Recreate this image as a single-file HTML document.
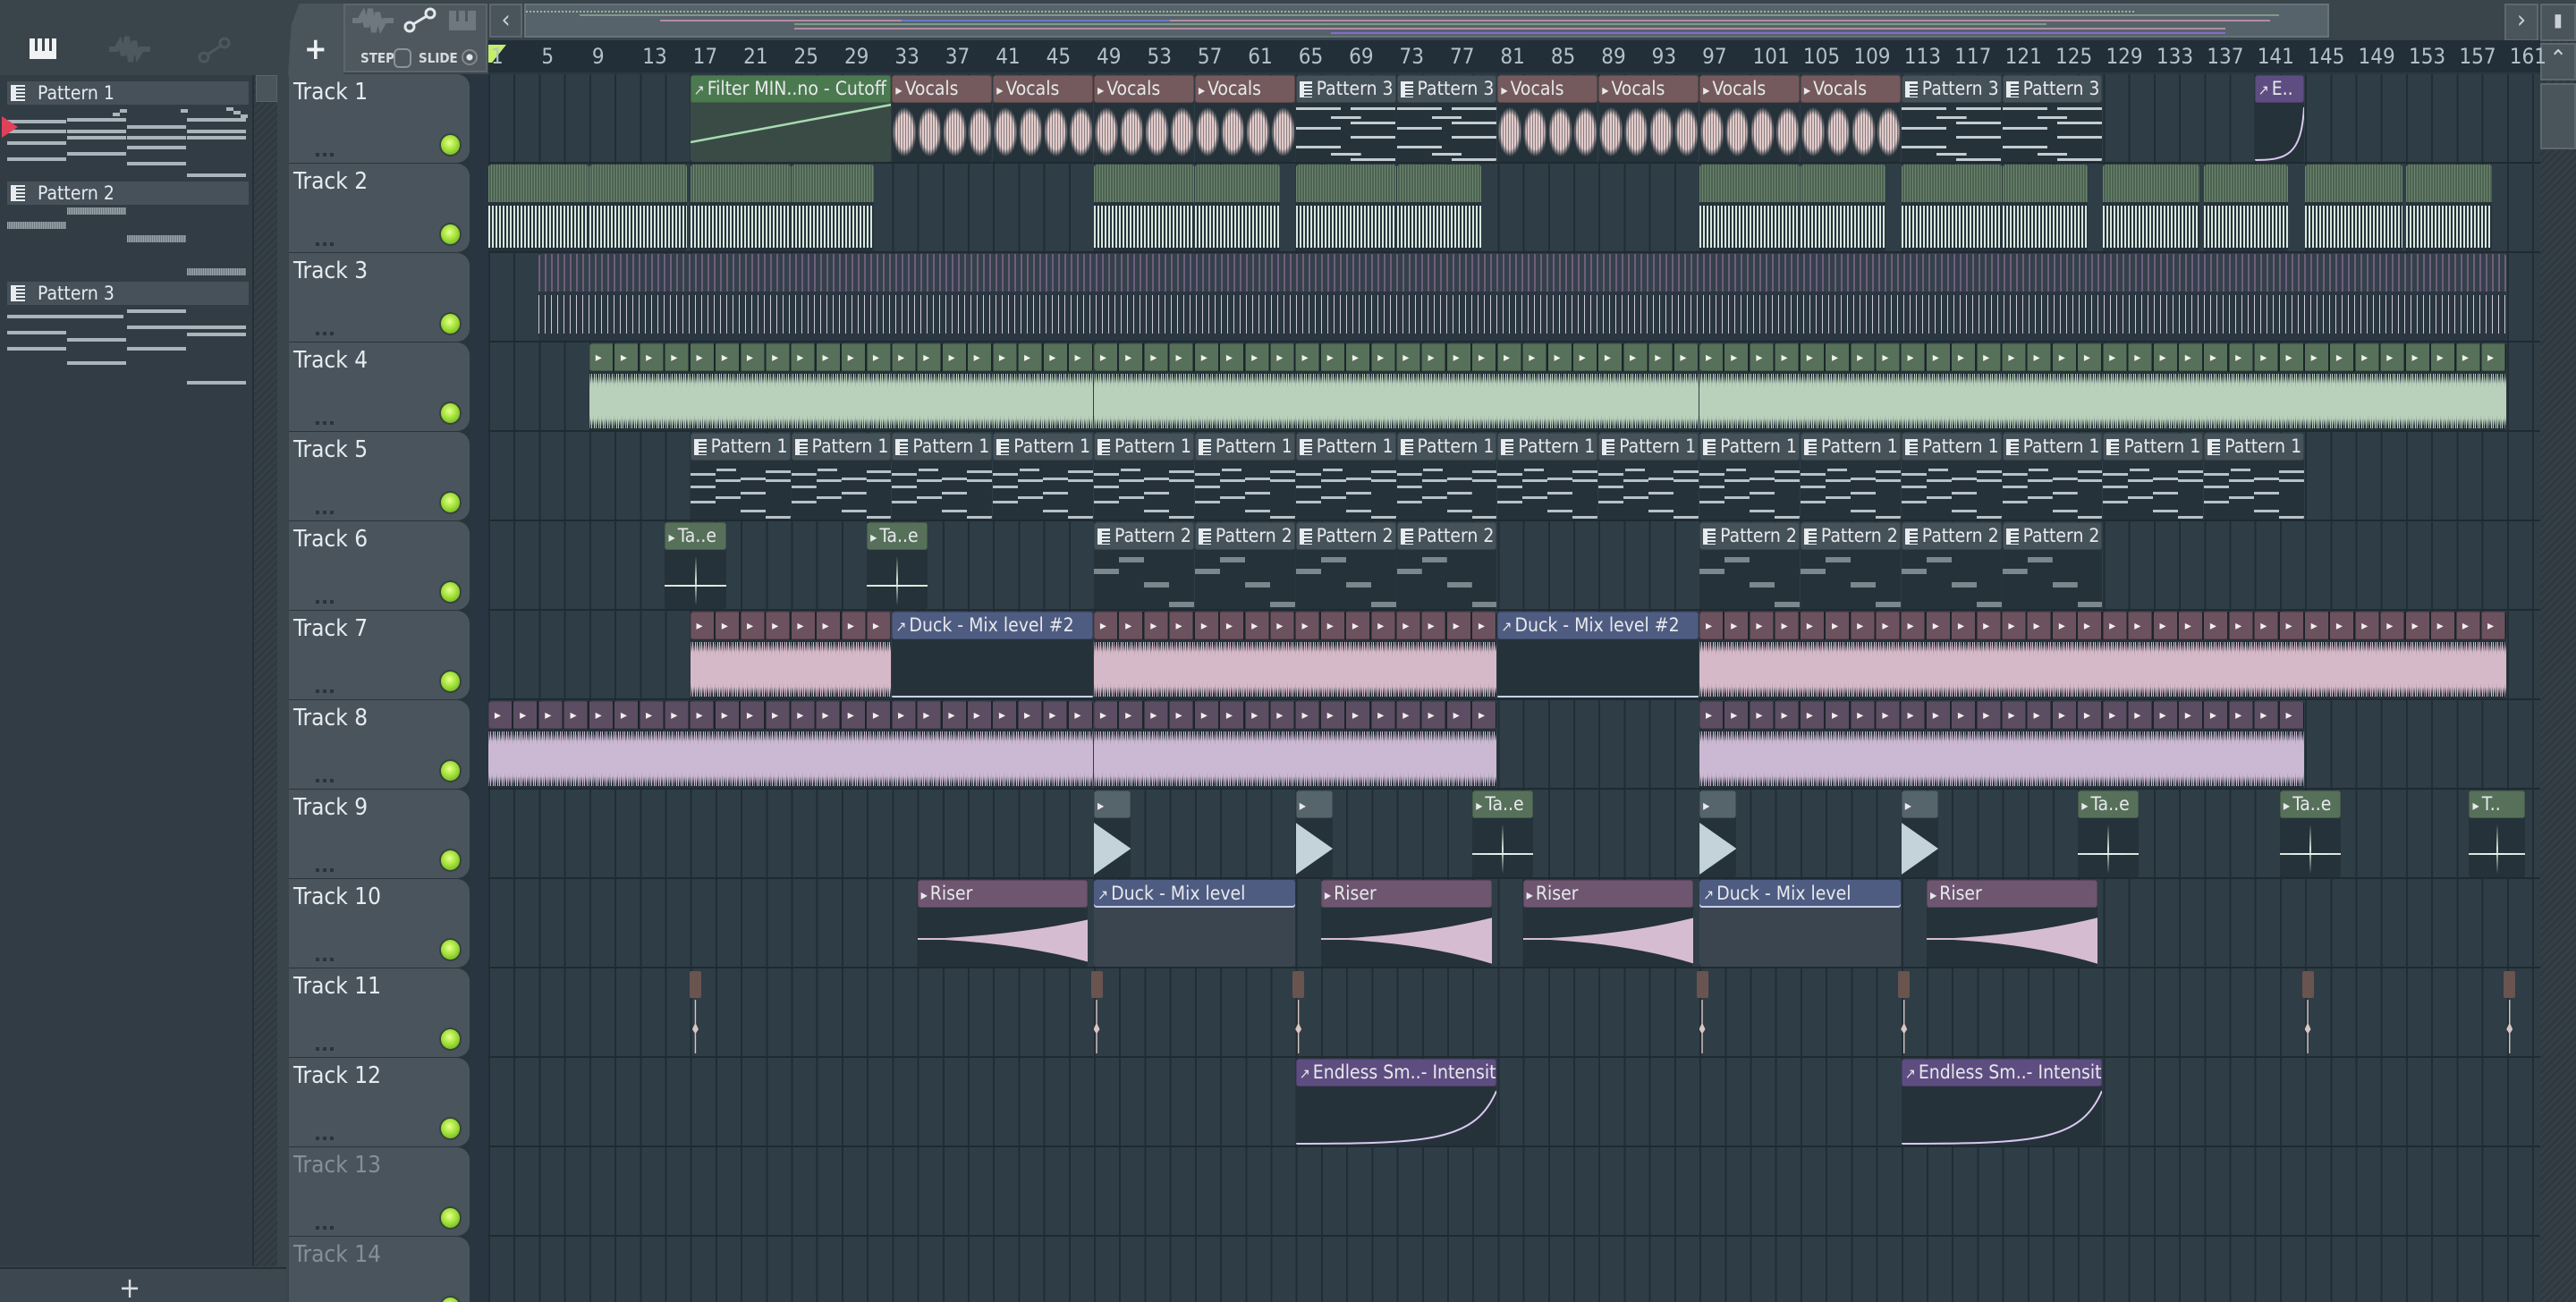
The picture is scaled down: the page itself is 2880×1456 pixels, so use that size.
<!DOCTYPE html>
<html><head><meta charset="utf-8"><style>
*{box-sizing:border-box;margin:0;padding:0}
html,body{width:2880px;height:1456px;overflow:hidden}
body{background:#3a444b;font-family:"DejaVu Sans Condensed","Liberation Sans Narrow","Liberation Sans",sans-serif;font-stretch:condensed;position:relative;color:#dfe5ea}
.a{position:absolute}
.x{left:calc(546px + (var(--b) - 1)*14.105px)}
#lp{left:0;top:0;width:320px;height:1456px;background:#3a444b}
#plist{left:0;top:84px;width:282px;height:1332px;background:#313c44}
#psb{left:282px;top:84px;width:28px;height:1332px;background:repeating-linear-gradient(135deg,#2f393f 0 3px,#343f46 3px 6px);border-left:2px solid #262f35}
#psb .th{left:2px;top:0;width:24px;height:30px;background:#4a545b;border:1px solid #596369}
#pbot{left:0;top:1417px;width:320px;height:39px;background:#3d474f;border-top:2px solid #262f35}
.pi{left:8px;width:270px;height:26px;background:#46515a;font-size:21px;line-height:26px;padding-left:34px;color:#e6eaee}
.pi i{position:absolute;left:4px;top:4px;width:16px;height:18px;background:repeating-linear-gradient(#e8ecef 0 2px,#46515a 2px 4px) 6px 0/10px 100% no-repeat,#e8ecef}
.pv{left:8px;width:270px;height:78px}
.nt{position:absolute;height:4px;background:#aab5bb}
.nd{position:absolute;height:8px;background:repeating-linear-gradient(90deg,#9aa5ab 0 1px,#6c777d 1px 2px)}
#th{left:323px;top:83px;width:202px;height:1373px;background:#2a343b}
.tr{position:absolute;left:0;width:202px;height:99px;background:#4a545c;border-radius:0 14px 14px 0}
.tr b{position:absolute;left:5px;top:5px;font-weight:normal;font-size:26px;color:#e6ebef}
.tr.d b{color:#858f96}
.tr .led{position:absolute;left:170px;top:68px;width:21px;height:22px;border-radius:50%;background:radial-gradient(circle at 45% 40%,#e6ff8c 0,#a2e23a 45%,#5ea41a 100%);box-shadow:0 0 0 2px #38443a}
.tr .dd{position:absolute;left:30px;top:88px;width:22px;height:4px;background:repeating-linear-gradient(90deg,#2b343a 0 4px,transparent 4px 8px)}
#strip{left:525px;top:83px;width:21px;height:1373px;background:#293540}
#grid{left:546px;top:83px;width:2294px;height:1373px;background:
repeating-linear-gradient(180deg,transparent 0 98px,#1f2a31 98px 100px),
repeating-linear-gradient(90deg,#222d35 0 2px,transparent 2px 28.21px),#2f3d46}
#ruler{left:546px;top:45px;width:2294px;height:38px;background:#222f38;border-bottom:2px solid #2a3740}
.rl{position:absolute;top:4px;font-size:24px;color:#b3c0c8;margin-left:3px}
#ovl{left:586px;top:4px;width:2018px;height:38px;background:#56636a;border:2px solid #67737a}
.bt{background:#4a545b;border:2px solid #5d676d;color:#c9d1d6;font-size:28px;text-align:center;line-height:32px}
.c{position:absolute;left:calc(546px + (var(--b) - 1)*14.105px);width:calc(var(--l)*14.105px - 1px);top:calc(84px + (var(--t) - 1)*100px);height:97px;background:#26323a;overflow:hidden;border-radius:3px}
.h{position:relative;height:31px;background:var(--hc,#46525a);color:#e7e9ec;font-size:21px;line-height:31px;padding-left:4px;white-space:nowrap;overflow:hidden;border-radius:3px;box-shadow:inset 0 0 0 1px rgba(0,0,0,.18)}
.h s{text-decoration:none;font-family:"DejaVu Sans",sans-serif;font-size:16px;margin-right:3px}
.h .pg{display:inline-block;width:14px;height:18px;vertical-align:-3px;margin-right:5px;background:repeating-linear-gradient(#e8ecef 0 2px,#46525a 2px 4px) 5px 1px/9px 16px no-repeat,#e8ecef}
.wv{position:absolute;left:0;right:0;top:34px;bottom:2px;background:linear-gradient(180deg,transparent 4%,var(--w) 18%,var(--w) 82%,transparent 96%),repeating-linear-gradient(90deg,var(--w) 0 1px,transparent 1px 2px,var(--w) 2px 3px,transparent 3px 5px)}
.wv:after{content:"";position:absolute;left:0;right:0;top:0;bottom:0;background:repeating-linear-gradient(90deg,rgba(38,50,58,.55) 0 1px,transparent 1px 4px,rgba(38,50,58,.3) 4px 5px,transparent 5px 9px);-webkit-mask:linear-gradient(180deg,#000 0,transparent 25%,transparent 75%,#000 100%)}
.seg{background:repeating-linear-gradient(90deg,var(--hc) 0 26px,rgba(0,0,0,.25) 26px 28.21px);font-family:"DejaVu Sans Mono",monospace;font-size:18px;letter-spacing:17.36px;padding-left:5px;color:#f2f0ee;font-weight:bold}
.g{--hc:#56705a;--w:#b9d0bb}
.pk{--hc:#6c525e;--w:#d6b9c8}
.pp{--hc:#5c4d62;--w:#cbb8d2}
.ri{--hc:#6e5670;--w:#d6bcd0}
.vo{--hc:#745a5c}
.vo .bl{position:absolute;left:0;right:0;top:36px;bottom:6px;background:radial-gradient(ellipse 48% 50% at 50% 50%,#e5cccb 0 70%,transparent 100%) 0 0/28.2px 100% repeat-x}
.vo .bl:after{content:"";position:absolute;inset:0;background:repeating-linear-gradient(90deg,rgba(38,50,58,.5) 0 1px,transparent 1px 3px)}
.pt .nb{position:absolute;left:0;right:0;top:34px;bottom:0}
.p1 .nb{background:
linear-gradient(#b7c1c7,#b7c1c7) 0% 18%/25% 3px no-repeat,
linear-gradient(#b7c1c7,#b7c1c7) 0% 42%/25% 3px no-repeat,
linear-gradient(#b7c1c7,#b7c1c7) 0% 70%/25% 3px no-repeat,
linear-gradient(#b7c1c7,#b7c1c7) 33.3% 30%/25% 3px no-repeat,
linear-gradient(#b7c1c7,#b7c1c7) 33.3% 62%/25% 3px no-repeat,
linear-gradient(#b7c1c7,#b7c1c7) 33.3% 10%/20% 3px no-repeat,
linear-gradient(#b7c1c7,#b7c1c7) 66.7% 26%/25% 3px no-repeat,
linear-gradient(#b7c1c7,#b7c1c7) 66.7% 54%/25% 3px no-repeat,
linear-gradient(#b7c1c7,#b7c1c7) 66.7% 86%/25% 3px no-repeat,
linear-gradient(#b7c1c7,#b7c1c7) 100% 14%/25% 3px no-repeat,
linear-gradient(#b7c1c7,#b7c1c7) 100% 30%/25% 3px no-repeat,
linear-gradient(#b7c1c7,#b7c1c7) 100% 98%/25% 3px no-repeat}
.p3 .nb{background:
linear-gradient(#c3ccd1,#c3ccd1) 0% 4%/45% 3px no-repeat,
linear-gradient(#c3ccd1,#c3ccd1) 0% 40%/45% 3px no-repeat,
linear-gradient(#c3ccd1,#c3ccd1) 0% 75%/45% 3px no-repeat,
linear-gradient(#c3ccd1,#c3ccd1) 100% 4%/45% 3px no-repeat,
linear-gradient(#c3ccd1,#c3ccd1) 100% 30%/45% 3px no-repeat,
linear-gradient(#c3ccd1,#c3ccd1) 100% 56%/45% 3px no-repeat,
linear-gradient(#c3ccd1,#c3ccd1) 100% 98%/45% 3px no-repeat,
linear-gradient(#c3ccd1,#c3ccd1) 50% 20%/30% 3px no-repeat,
linear-gradient(#c3ccd1,#c3ccd1) 50% 88%/30% 3px no-repeat}
.p2 .nb{background:
linear-gradient(#7c878d,#7c878d) 0% 32%/25% 6px no-repeat,
linear-gradient(#7c878d,#7c878d) 33.3% 8%/25% 6px no-repeat,
linear-gradient(#7c878d,#7c878d) 66.7% 58%/25% 6px no-repeat,
linear-gradient(#7c878d,#7c878d) 100% 97%/25% 6px no-repeat}
.t2{background:#26323a}
.t2 .up{position:absolute;left:0;right:0;top:0;height:42px;background:repeating-linear-gradient(90deg,#6b8470 0 1px,#4d6351 1px 3px)}
.t2 .lo{position:absolute;left:0;right:0;top:46px;bottom:4px;background:repeating-linear-gradient(90deg,#d8e8de 0 2px,transparent 2px 4px)}
.t3{background:#2a3640}
.t3 .up{position:absolute;left:0;right:0;top:0;height:42px;background:repeating-linear-gradient(90deg,#6e5e7c 0 2px,#34404a 2px 7px)}
.t3 .lo{position:absolute;left:0;right:0;top:46px;bottom:8px;background:repeating-linear-gradient(90deg,#cfc8d8 0 1px,transparent 1px 7px)}
.gy{--hc:#56646c}
.tri{position:absolute;left:0;top:36px;width:100%;height:58px;background:#c3d3d9;clip-path:polygon(0 0,100% 50%,0 100%)}
.star{position:absolute;left:0;right:0;top:38px;bottom:4px}
.star:before{content:"";position:absolute;left:calc(50% - 1px);top:0;bottom:0;width:2px;background:linear-gradient(180deg,transparent,#d6e6d6 50%,transparent)}
.star:after{content:"";position:absolute;left:0;right:0;top:calc(50% + 4px);height:2px;background:linear-gradient(90deg,#d6e6d6,#e8f2e8 50%,#d6e6d6)}
.sg{--hc:#57705a}
.du{--hc:#4f5c82}
.pa{--hc:#5e4d80}
svg{position:absolute;left:0;top:0}
.mk{position:absolute;width:13px;top:calc(84px + 10*100px);height:97px;left:calc(546px + (var(--b) - 1)*14.105px - 12px)}
.mk .mh{position:absolute;left:0;top:2px;width:13px;height:30px;background:#6a5450;border-radius:2px}
.mk .ml{position:absolute;left:3px;top:34px;width:7px;height:60px;background:#d8c6c2;clip-path:polygon(40% 0,60% 0,60% 45%,100% 55%,60% 62%,60% 100%,40% 100%,40% 62%,0 55%,40% 45%)}
</style></head><body>

<div class="a" id="lp"></div>
<div class="a" style="left:33px;top:43px;width:30px;height:23px;background:#f0f2f3"></div>
<div class="a" style="left:39px;top:43px;width:3px;height:14px;background:#3a444b"></div>
<div class="a" style="left:47px;top:43px;width:3px;height:14px;background:#3a444b"></div>
<div class="a" style="left:55px;top:43px;width:3px;height:14px;background:#3a444b"></div>
<svg style="left:120px;top:38px" width="50" height="34"><path d="M2 17 L10 17 L14 10 L18 24 L22 3 L26 31 L30 8 L34 24 L38 17 L48 17" stroke="#4c575e" stroke-width="6" fill="none"/></svg>
<svg style="left:220px;top:40px" width="40" height="32"><circle cx="8" cy="24" r="5" stroke="#4c575e" stroke-width="3" fill="none"/><circle cx="31" cy="8" r="5" stroke="#4c575e" stroke-width="3" fill="none"/><path d="M12 21 L27 11" stroke="#4c575e" stroke-width="3"/></svg>
<div class="a" id="plist"></div>
<div class="a" id="psb"><div class="a th"></div></div>
<div class="a" id="pbot"><span class="a" style="left:133px;top:2px;font-size:32px;color:#d9dee2;font-family:'DejaVu Sans',sans-serif">+</span></div>

<div class="a pi" style="top:91px"><i></i>Pattern 1</div>
<div class="a pv" style="top:118px">
<div class="nt" style="left:0;top:16px;width:66px"></div><div class="nt" style="left:0;top:27px;width:66px"></div><div class="nt" style="left:0;top:40px;width:66px"></div><div class="nt" style="left:0;top:58px;width:66px"></div>
<div class="nt" style="left:67px;top:14px;width:66px"></div><div class="nt" style="left:67px;top:27px;width:66px"></div><div class="nt" style="left:67px;top:34px;width:66px"></div><div class="nt" style="left:67px;top:52px;width:66px"></div><div class="nt" style="left:118px;top:8px;width:8px"></div><div class="nt" style="left:126px;top:4px;width:8px"></div>
<div class="nt" style="left:134px;top:22px;width:66px"></div><div class="nt" style="left:134px;top:34px;width:66px"></div><div class="nt" style="left:134px;top:45px;width:66px"></div><div class="nt" style="left:134px;top:63px;width:66px"></div><div class="nt" style="left:194px;top:4px;width:8px"></div>
<div class="nt" style="left:201px;top:14px;width:66px"></div><div class="nt" style="left:201px;top:27px;width:66px"></div><div class="nt" style="left:201px;top:34px;width:66px"></div><div class="nt" style="left:201px;top:76px;width:66px"></div><div class="nt" style="left:245px;top:2px;width:8px"></div><div class="nt" style="left:253px;top:6px;width:8px"></div><div class="nt" style="left:261px;top:10px;width:8px"></div>
</div>
<div class="a" style="left:2px;top:130px;width:18px;height:24px;background:#e0405a;clip-path:polygon(0 0,100% 50%,0 100%)"></div>
<div class="a pi" style="top:203px"><i></i>Pattern 2</div>
<div class="a pv" style="top:230px">
<div class="nd" style="left:67px;top:2px;width:66px"></div><div class="nd" style="left:0;top:18px;width:66px"></div><div class="nd" style="left:134px;top:33px;width:66px"></div><div class="nd" style="left:201px;top:70px;width:66px"></div>
</div>
<div class="a pi" style="top:315px"><i></i>Pattern 3</div>
<div class="a pv" style="top:342px">
<div class="nt" style="left:0;top:10px;width:130px"></div><div class="nt" style="left:0;top:28px;width:66px"></div><div class="nt" style="left:0;top:46px;width:66px"></div><div class="nt" style="left:67px;top:36px;width:66px"></div><div class="nt" style="left:67px;top:62px;width:66px"></div>
<div class="nt" style="left:134px;top:4px;width:66px"></div><div class="nt" style="left:134px;top:22px;width:133px"></div><div class="nt" style="left:134px;top:46px;width:66px"></div><div class="nt" style="left:201px;top:30px;width:66px"></div><div class="nt" style="left:201px;top:84px;width:66px"></div>
</div>

<div class="a" style="left:322px;top:4px;width:62px;height:80px;background:#4a545b;clip-path:polygon(20% 0,100% 0,100% 100%,0 100%,6% 30%)"></div>
<span class="a" style="left:340px;top:35px;font-size:34px;color:#eef1f3;font-family:'DejaVu Sans',sans-serif;font-weight:bold">+</span>
<div class="a" style="left:384px;top:4px;width:161px;height:77px;background:#4f585f;border:2px solid #5c656b"></div>
<svg style="left:392px;top:8px" width="50" height="30"><path d="M2 15 L10 15 L14 8 L18 22 L22 2 L26 28 L30 6 L34 22 L38 15 L48 15" stroke="#6e787e" stroke-width="6" fill="none"/></svg>
<svg style="left:450px;top:8px" width="40" height="30"><circle cx="8" cy="22" r="5" stroke="#e3e8eb" stroke-width="3" fill="none"/><circle cx="31" cy="7" r="5" stroke="#e3e8eb" stroke-width="3" fill="none"/><path d="M12 19 L27 10" stroke="#e3e8eb" stroke-width="3"/></svg>
<div class="a" style="left:502px;top:12px;width:30px;height:22px;background:#6e787e"></div>
<div class="a" style="left:510px;top:12px;width:3px;height:12px;background:#4f585f"></div>
<div class="a" style="left:520px;top:12px;width:3px;height:12px;background:#4f585f"></div>
<span class="a" style="left:403px;top:56px;font-size:15px;color:#d5dce0;font-weight:bold">STEP</span>
<div class="a" style="left:440px;top:54px;width:20px;height:22px;border:2px solid #8a9399;border-radius:6px"></div>
<span class="a" style="left:468px;top:56px;font-size:15px;color:#d5dce0;font-weight:bold">SLIDE</span>
<div class="a" style="left:516px;top:55px;width:18px;height:18px;border:2px solid #7f888e;border-radius:50%;background:radial-gradient(circle,#e5e9ec 0 3px,transparent 4px)"></div>

<div class="a bt" style="left:547px;top:4px;width:37px;height:38px">&lsaquo;</div>
<div class="a" id="ovl">
<div class="a" style="left:0;top:6px;width:1800px;height:2px;background:repeating-linear-gradient(90deg,#9fb0a6 0 2px,transparent 2px 4px)"></div>
<div class="a" style="left:60px;top:10px;width:1900px;height:2px;background:#7e9a84"></div>
<div class="a" style="left:150px;top:16px;width:1800px;height:2px;background:#b48ca4"></div>
<div class="a" style="left:420px;top:16px;width:300px;height:2px;background:#6a7ac8"></div>
<div class="a" style="left:300px;top:25px;width:1600px;height:2px;background:#b48ca4"></div>
<div class="a" style="left:300px;top:20px;width:1400px;height:2px;background:#7e9a84"></div>
<div class="a" style="left:900px;top:30px;width:1000px;height:2px;background:#8a6ad0"></div>
</div>
<div class="a bt" style="left:2800px;top:4px;width:38px;height:42px">&rsaquo;</div>
<div class="a bt" style="left:2840px;top:4px;width:40px;height:42px;font-size:20px">&#9646;</div>
<div class="a" style="left:2838px;top:46px;width:42px;height:1410px;background:repeating-linear-gradient(135deg,#2e383e 0 3px,#343f46 3px 6px)"></div>
<div class="a bt" style="left:2840px;top:48px;width:40px;height:42px;font-size:26px">&#8963;</div>
<div class="a bt" style="left:2840px;top:93px;width:40px;height:74px"></div>

<div class="a" id="ruler"></div>
<div class="a" style="left:546px;top:50px;width:20px;height:20px;background:#c3ef6a;clip-path:polygon(0 0,100% 0,20% 100%,0 100%)"></div>
<div class="a" style="left:0;top:45px;width:0;height:0">
<span class="rl x" style="--b:1">1</span><span class="rl x" style="--b:5">5</span><span class="rl x" style="--b:9">9</span><span class="rl x" style="--b:13">13</span><span class="rl x" style="--b:17">17</span><span class="rl x" style="--b:21">21</span><span class="rl x" style="--b:25">25</span><span class="rl x" style="--b:29">29</span><span class="rl x" style="--b:33">33</span><span class="rl x" style="--b:37">37</span><span class="rl x" style="--b:41">41</span><span class="rl x" style="--b:45">45</span><span class="rl x" style="--b:49">49</span><span class="rl x" style="--b:53">53</span><span class="rl x" style="--b:57">57</span><span class="rl x" style="--b:61">61</span><span class="rl x" style="--b:65">65</span><span class="rl x" style="--b:69">69</span><span class="rl x" style="--b:73">73</span><span class="rl x" style="--b:77">77</span><span class="rl x" style="--b:81">81</span><span class="rl x" style="--b:85">85</span><span class="rl x" style="--b:89">89</span><span class="rl x" style="--b:93">93</span><span class="rl x" style="--b:97">97</span><span class="rl x" style="--b:101">101</span><span class="rl x" style="--b:105">105</span><span class="rl x" style="--b:109">109</span><span class="rl x" style="--b:113">113</span><span class="rl x" style="--b:117">117</span><span class="rl x" style="--b:121">121</span><span class="rl x" style="--b:125">125</span><span class="rl x" style="--b:129">129</span><span class="rl x" style="--b:133">133</span><span class="rl x" style="--b:137">137</span><span class="rl x" style="--b:141">141</span><span class="rl x" style="--b:145">145</span><span class="rl x" style="--b:149">149</span><span class="rl x" style="--b:153">153</span><span class="rl x" style="--b:157">157</span><span class="rl x" style="--b:161">161</span>
</div>

<div class="a" id="th">
<div class="tr" style="top:0"><b>Track 1</b><i class="dd"></i><i class="led"></i></div>
<div class="tr" style="top:100px"><b>Track 2</b><i class="dd"></i><i class="led"></i></div>
<div class="tr" style="top:200px"><b>Track 3</b><i class="dd"></i><i class="led"></i></div>
<div class="tr" style="top:300px"><b>Track 4</b><i class="dd"></i><i class="led"></i></div>
<div class="tr" style="top:400px"><b>Track 5</b><i class="dd"></i><i class="led"></i></div>
<div class="tr" style="top:500px"><b>Track 6</b><i class="dd"></i><i class="led"></i></div>
<div class="tr" style="top:600px"><b>Track 7</b><i class="dd"></i><i class="led"></i></div>
<div class="tr" style="top:700px"><b>Track 8</b><i class="dd"></i><i class="led"></i></div>
<div class="tr" style="top:800px"><b>Track 9</b><i class="dd"></i><i class="led"></i></div>
<div class="tr" style="top:900px"><b>Track 10</b><i class="dd"></i><i class="led"></i></div>
<div class="tr" style="top:1000px"><b>Track 11</b><i class="dd"></i><i class="led"></i></div>
<div class="tr" style="top:1100px"><b>Track 12</b><i class="dd"></i><i class="led"></i></div>
<div class="tr d" style="top:1200px"><b>Track 13</b><i class="dd"></i><i class="led"></i></div>
<div class="tr d" style="top:1300px"><b>Track 14</b><i class="dd"></i><i class="led"></i></div>
</div>
<div class="a" id="strip"></div>
<div class="a" id="grid"></div>

<!-- Track 1 -->
<div class="c" style="--t:1;--b:17;--l:16;background:#3a4b46;--hc:#4c7a50"><div class="h"><s>&#8599;</s>Filter MIN..no - Cutoff</div><svg width="226" height="97"><path d="M0 75 L225 33" stroke="#a8dcb0" stroke-width="2.5"/></svg></div>
<div class="c vo" style="--t:1;--b:33;--l:8"><div class="h"><s>&#9656;</s>Vocals</div><i class="bl"></i></div>
<div class="c vo" style="--t:1;--b:41;--l:8"><div class="h"><s>&#9656;</s>Vocals</div><i class="bl"></i></div>
<div class="c vo" style="--t:1;--b:49;--l:8"><div class="h"><s>&#9656;</s>Vocals</div><i class="bl"></i></div>
<div class="c vo" style="--t:1;--b:57;--l:8"><div class="h"><s>&#9656;</s>Vocals</div><i class="bl"></i></div>
<div class="c pt p3" style="--t:1;--b:65;--l:8"><div class="h"><i class="pg"></i>Pattern 3</div><i class="nb"></i></div>
<div class="c pt p3" style="--t:1;--b:73;--l:8"><div class="h"><i class="pg"></i>Pattern 3</div><i class="nb"></i></div>
<div class="c vo" style="--t:1;--b:81;--l:8"><div class="h"><s>&#9656;</s>Vocals</div><i class="bl"></i></div>
<div class="c vo" style="--t:1;--b:89;--l:8"><div class="h"><s>&#9656;</s>Vocals</div><i class="bl"></i></div>
<div class="c vo" style="--t:1;--b:97;--l:8"><div class="h"><s>&#9656;</s>Vocals</div><i class="bl"></i></div>
<div class="c vo" style="--t:1;--b:105;--l:8"><div class="h"><s>&#9656;</s>Vocals</div><i class="bl"></i></div>
<div class="c pt p3" style="--t:1;--b:113;--l:8"><div class="h"><i class="pg"></i>Pattern 3</div><i class="nb"></i></div>
<div class="c pt p3" style="--t:1;--b:121;--l:8"><div class="h"><i class="pg"></i>Pattern 3</div><i class="nb"></i></div>
<div class="c pa" style="--t:1;--b:141;--l:4"><div class="h"><s>&#8599;</s>E..</div><svg width="56" height="97"><path d="M0 95 C35 95 52 90 55 36" stroke="#d8c8f0" stroke-width="2" fill="none"/></svg></div>

<!-- Track 2 -->
<div class="c t2" style="--t:2;--b:1;--l:8"><i class="up"></i><i class="lo"></i></div>
<div class="c t2" style="--t:2;--b:9;--l:7.8"><i class="up"></i><i class="lo"></i></div>
<div class="c t2" style="--t:2;--b:17;--l:8"><i class="up"></i><i class="lo"></i></div>
<div class="c t2" style="--t:2;--b:25;--l:6.6"><i class="up"></i><i class="lo"></i></div>
<div class="c t2" style="--t:2;--b:49;--l:8"><i class="up"></i><i class="lo"></i></div>
<div class="c t2" style="--t:2;--b:57;--l:6.8"><i class="up"></i><i class="lo"></i></div>
<div class="c t2" style="--t:2;--b:65;--l:8"><i class="up"></i><i class="lo"></i></div>
<div class="c t2" style="--t:2;--b:73;--l:6.8"><i class="up"></i><i class="lo"></i></div>
<div class="c t2" style="--t:2;--b:97;--l:8"><i class="up"></i><i class="lo"></i></div>
<div class="c t2" style="--t:2;--b:105;--l:6.8"><i class="up"></i><i class="lo"></i></div>
<div class="c t2" style="--t:2;--b:113;--l:8"><i class="up"></i><i class="lo"></i></div>
<div class="c t2" style="--t:2;--b:121;--l:6.8"><i class="up"></i><i class="lo"></i></div>
<div class="c t2" style="--t:2;--b:129;--l:7.7"><i class="up"></i><i class="lo"></i></div>
<div class="c t2" style="--t:2;--b:137;--l:6.7"><i class="up"></i><i class="lo"></i></div>
<div class="c t2" style="--t:2;--b:145;--l:7.8"><i class="up"></i><i class="lo"></i></div>
<div class="c t2" style="--t:2;--b:153;--l:6.9"><i class="up"></i><i class="lo"></i></div>

<!-- Track 3 -->
<div class="c t3" style="--t:3;--b:5;--l:156"><i class="up"></i><i class="lo"></i></div>

<!-- Track 4 -->
<div class="c g" style="--t:4;--b:9;--l:40"><div class="h seg">&#9656;&#9656;&#9656;&#9656;&#9656;&#9656;&#9656;&#9656;&#9656;&#9656;&#9656;&#9656;&#9656;&#9656;&#9656;&#9656;&#9656;&#9656;&#9656;&#9656;</div><i class="wv"></i></div>
<div class="c g" style="--t:4;--b:49;--l:48"><div class="h seg">&#9656;&#9656;&#9656;&#9656;&#9656;&#9656;&#9656;&#9656;&#9656;&#9656;&#9656;&#9656;&#9656;&#9656;&#9656;&#9656;&#9656;&#9656;&#9656;&#9656;&#9656;&#9656;&#9656;&#9656;</div><i class="wv"></i></div>
<div class="c g" style="--t:4;--b:97;--l:64"><div class="h seg">&#9656;&#9656;&#9656;&#9656;&#9656;&#9656;&#9656;&#9656;&#9656;&#9656;&#9656;&#9656;&#9656;&#9656;&#9656;&#9656;&#9656;&#9656;&#9656;&#9656;&#9656;&#9656;&#9656;&#9656;&#9656;&#9656;&#9656;&#9656;&#9656;&#9656;&#9656;&#9656;</div><i class="wv"></i></div>

<!-- Track 5 -->
<div class="c pt p1" style="--t:5;--b:17;--l:8"><div class="h"><i class="pg"></i>Pattern 1</div><i class="nb"></i></div>
<div class="c pt p1" style="--t:5;--b:25;--l:8"><div class="h"><i class="pg"></i>Pattern 1</div><i class="nb"></i></div>
<div class="c pt p1" style="--t:5;--b:33;--l:8"><div class="h"><i class="pg"></i>Pattern 1</div><i class="nb"></i></div>
<div class="c pt p1" style="--t:5;--b:41;--l:8"><div class="h"><i class="pg"></i>Pattern 1</div><i class="nb"></i></div>
<div class="c pt p1" style="--t:5;--b:49;--l:8"><div class="h"><i class="pg"></i>Pattern 1</div><i class="nb"></i></div>
<div class="c pt p1" style="--t:5;--b:57;--l:8"><div class="h"><i class="pg"></i>Pattern 1</div><i class="nb"></i></div>
<div class="c pt p1" style="--t:5;--b:65;--l:8"><div class="h"><i class="pg"></i>Pattern 1</div><i class="nb"></i></div>
<div class="c pt p1" style="--t:5;--b:73;--l:8"><div class="h"><i class="pg"></i>Pattern 1</div><i class="nb"></i></div>
<div class="c pt p1" style="--t:5;--b:81;--l:8"><div class="h"><i class="pg"></i>Pattern 1</div><i class="nb"></i></div>
<div class="c pt p1" style="--t:5;--b:89;--l:8"><div class="h"><i class="pg"></i>Pattern 1</div><i class="nb"></i></div>
<div class="c pt p1" style="--t:5;--b:97;--l:8"><div class="h"><i class="pg"></i>Pattern 1</div><i class="nb"></i></div>
<div class="c pt p1" style="--t:5;--b:105;--l:8"><div class="h"><i class="pg"></i>Pattern 1</div><i class="nb"></i></div>
<div class="c pt p1" style="--t:5;--b:113;--l:8"><div class="h"><i class="pg"></i>Pattern 1</div><i class="nb"></i></div>
<div class="c pt p1" style="--t:5;--b:121;--l:8"><div class="h"><i class="pg"></i>Pattern 1</div><i class="nb"></i></div>
<div class="c pt p1" style="--t:5;--b:129;--l:8"><div class="h"><i class="pg"></i>Pattern 1</div><i class="nb"></i></div>
<div class="c pt p1" style="--t:5;--b:137;--l:8"><div class="h"><i class="pg"></i>Pattern 1</div><i class="nb"></i></div>

<!-- Track 6 -->
<div class="c sg" style="--t:6;--b:15;--l:4.9"><div class="h"><s>&#9656;</s>Ta..e</div><i class="star"></i></div>
<div class="c sg" style="--t:6;--b:31;--l:4.9"><div class="h"><s>&#9656;</s>Ta..e</div><i class="star"></i></div>
<div class="c pt p2" style="--t:6;--b:49;--l:8"><div class="h"><i class="pg"></i>Pattern 2</div><i class="nb"></i></div>
<div class="c pt p2" style="--t:6;--b:57;--l:8"><div class="h"><i class="pg"></i>Pattern 2</div><i class="nb"></i></div>
<div class="c pt p2" style="--t:6;--b:65;--l:8"><div class="h"><i class="pg"></i>Pattern 2</div><i class="nb"></i></div>
<div class="c pt p2" style="--t:6;--b:73;--l:8"><div class="h"><i class="pg"></i>Pattern 2</div><i class="nb"></i></div>
<div class="c pt p2" style="--t:6;--b:97;--l:8"><div class="h"><i class="pg"></i>Pattern 2</div><i class="nb"></i></div>
<div class="c pt p2" style="--t:6;--b:105;--l:8"><div class="h"><i class="pg"></i>Pattern 2</div><i class="nb"></i></div>
<div class="c pt p2" style="--t:6;--b:113;--l:8"><div class="h"><i class="pg"></i>Pattern 2</div><i class="nb"></i></div>
<div class="c pt p2" style="--t:6;--b:121;--l:8"><div class="h"><i class="pg"></i>Pattern 2</div><i class="nb"></i></div>

<!-- Track 7 -->
<div class="c pk" style="--t:7;--b:17;--l:16"><div class="h seg">&#9656;&#9656;&#9656;&#9656;&#9656;&#9656;&#9656;&#9656;</div><i class="wv"></i></div>
<div class="c du" style="--t:7;--b:33;--l:16"><div class="h"><s>&#8599;</s>Duck - Mix level #2</div><i class="a" style="left:0;right:0;bottom:1px;height:2px;background:#c8d0ec"></i></div>
<div class="c pk" style="--t:7;--b:49;--l:32"><div class="h seg">&#9656;&#9656;&#9656;&#9656;&#9656;&#9656;&#9656;&#9656;&#9656;&#9656;&#9656;&#9656;&#9656;&#9656;&#9656;&#9656;</div><i class="wv"></i></div>
<div class="c du" style="--t:7;--b:81;--l:16"><div class="h"><s>&#8599;</s>Duck - Mix level #2</div><i class="a" style="left:0;right:0;bottom:1px;height:2px;background:#c8d0ec"></i></div>
<div class="c pk" style="--t:7;--b:97;--l:64"><div class="h seg">&#9656;&#9656;&#9656;&#9656;&#9656;&#9656;&#9656;&#9656;&#9656;&#9656;&#9656;&#9656;&#9656;&#9656;&#9656;&#9656;&#9656;&#9656;&#9656;&#9656;&#9656;&#9656;&#9656;&#9656;&#9656;&#9656;&#9656;&#9656;&#9656;&#9656;&#9656;&#9656;</div><i class="wv"></i></div>

<!-- Track 8 -->
<div class="c pp" style="--t:8;--b:1;--l:48"><div class="h seg">&#9656;&#9656;&#9656;&#9656;&#9656;&#9656;&#9656;&#9656;&#9656;&#9656;&#9656;&#9656;&#9656;&#9656;&#9656;&#9656;&#9656;&#9656;&#9656;&#9656;&#9656;&#9656;&#9656;&#9656;</div><i class="wv"></i></div>
<div class="c pp" style="--t:8;--b:49;--l:32"><div class="h seg">&#9656;&#9656;&#9656;&#9656;&#9656;&#9656;&#9656;&#9656;&#9656;&#9656;&#9656;&#9656;&#9656;&#9656;&#9656;&#9656;</div><i class="wv"></i></div>
<div class="c pp" style="--t:8;--b:97;--l:48"><div class="h seg">&#9656;&#9656;&#9656;&#9656;&#9656;&#9656;&#9656;&#9656;&#9656;&#9656;&#9656;&#9656;&#9656;&#9656;&#9656;&#9656;&#9656;&#9656;&#9656;&#9656;&#9656;&#9656;&#9656;&#9656;</div><i class="wv"></i></div>

<!-- Track 9 -->
<div class="c gy" style="--t:9;--b:49;--l:3"><div class="h"><s>&#9656;</s></div><i class="tri"></i></div>
<div class="c gy" style="--t:9;--b:65;--l:3"><div class="h"><s>&#9656;</s></div><i class="tri"></i></div>
<div class="c sg" style="--t:9;--b:79;--l:4.9"><div class="h"><s>&#9656;</s>Ta..e</div><i class="star"></i></div>
<div class="c gy" style="--t:9;--b:97;--l:3"><div class="h"><s>&#9656;</s></div><i class="tri"></i></div>
<div class="c gy" style="--t:9;--b:113;--l:3"><div class="h"><s>&#9656;</s></div><i class="tri"></i></div>
<div class="c sg" style="--t:9;--b:127;--l:4.9"><div class="h"><s>&#9656;</s>Ta..e</div><i class="star"></i></div>
<div class="c sg" style="--t:9;--b:143;--l:4.9"><div class="h"><s>&#9656;</s>Ta..e</div><i class="star"></i></div>
<div class="c sg" style="--t:9;--b:158;--l:4.5"><div class="h"><s>&#9656;</s>T..</div><i class="star"></i></div>

<!-- Track 10 -->
<div class="c ri" style="--t:10;--b:35;--l:13.6"><div class="h"><s>&#9656;</s>Riser</div><svg width="192" height="97"><path d="M0 65 L30 65 Q120 60 192 44 L192 92 Q120 72 30 67 L0 67 Z" fill="#d6bcd0"/></svg></div>
<div class="c du" style="--t:10;--b:49;--l:16;background:#3a4550"><div class="h" style="box-shadow:inset 0 -2px 0 #c8d0ec"><s>&#8599;</s>Duck - Mix level</div></div>
<div class="c ri" style="--t:10;--b:67;--l:13.6"><div class="h"><s>&#9656;</s>Riser</div><svg width="192" height="97"><path d="M0 65 L30 65 Q120 60 192 42 L192 94 Q120 72 30 67 L0 67 Z" fill="#d6bcd0"/></svg></div>
<div class="c ri" style="--t:10;--b:83;--l:13.6"><div class="h"><s>&#9656;</s>Riser</div><svg width="192" height="97"><path d="M0 65 L30 65 Q120 60 192 42 L192 94 Q120 72 30 67 L0 67 Z" fill="#d6bcd0"/></svg></div>
<div class="c du" style="--t:10;--b:97;--l:16;background:#3a4550"><div class="h" style="box-shadow:inset 0 -2px 0 #c8d0ec"><s>&#8599;</s>Duck - Mix level</div></div>
<div class="c ri" style="--t:10;--b:115;--l:13.6"><div class="h"><s>&#9656;</s>Riser</div><svg width="192" height="97"><path d="M0 65 L30 65 Q120 60 192 42 L192 94 Q120 72 30 67 L0 67 Z" fill="#d6bcd0"/></svg></div>

<!-- Track 11 -->
<div class="mk" style="--b:17.8"><i class="mh"></i><i class="ml"></i></div>
<div class="mk" style="--b:49.6"><i class="mh"></i><i class="ml"></i></div>
<div class="mk" style="--b:65.6"><i class="mh"></i><i class="ml"></i></div>
<div class="mk" style="--b:97.6"><i class="mh"></i><i class="ml"></i></div>
<div class="mk" style="--b:113.6"><i class="mh"></i><i class="ml"></i></div>
<div class="mk" style="--b:145.6"><i class="mh"></i><i class="ml"></i></div>
<div class="mk" style="--b:161.6"><i class="mh"></i><i class="ml"></i></div>

<!-- Track 12 -->
<div class="c pa" style="--t:12;--b:65;--l:16"><div class="h"><s>&#8599;</s>Endless Sm..- Intensit</div><svg width="226" height="97"><path d="M0 95 C150 95 200 92 224 36" stroke="#d8c8f0" stroke-width="2" fill="none"/></svg></div>
<div class="c pa" style="--t:12;--b:113;--l:16"><div class="h"><s>&#8599;</s>Endless Sm..- Intensit</div><svg width="226" height="97"><path d="M0 95 C150 95 200 92 224 36" stroke="#d8c8f0" stroke-width="2" fill="none"/></svg></div>

</body></html>
